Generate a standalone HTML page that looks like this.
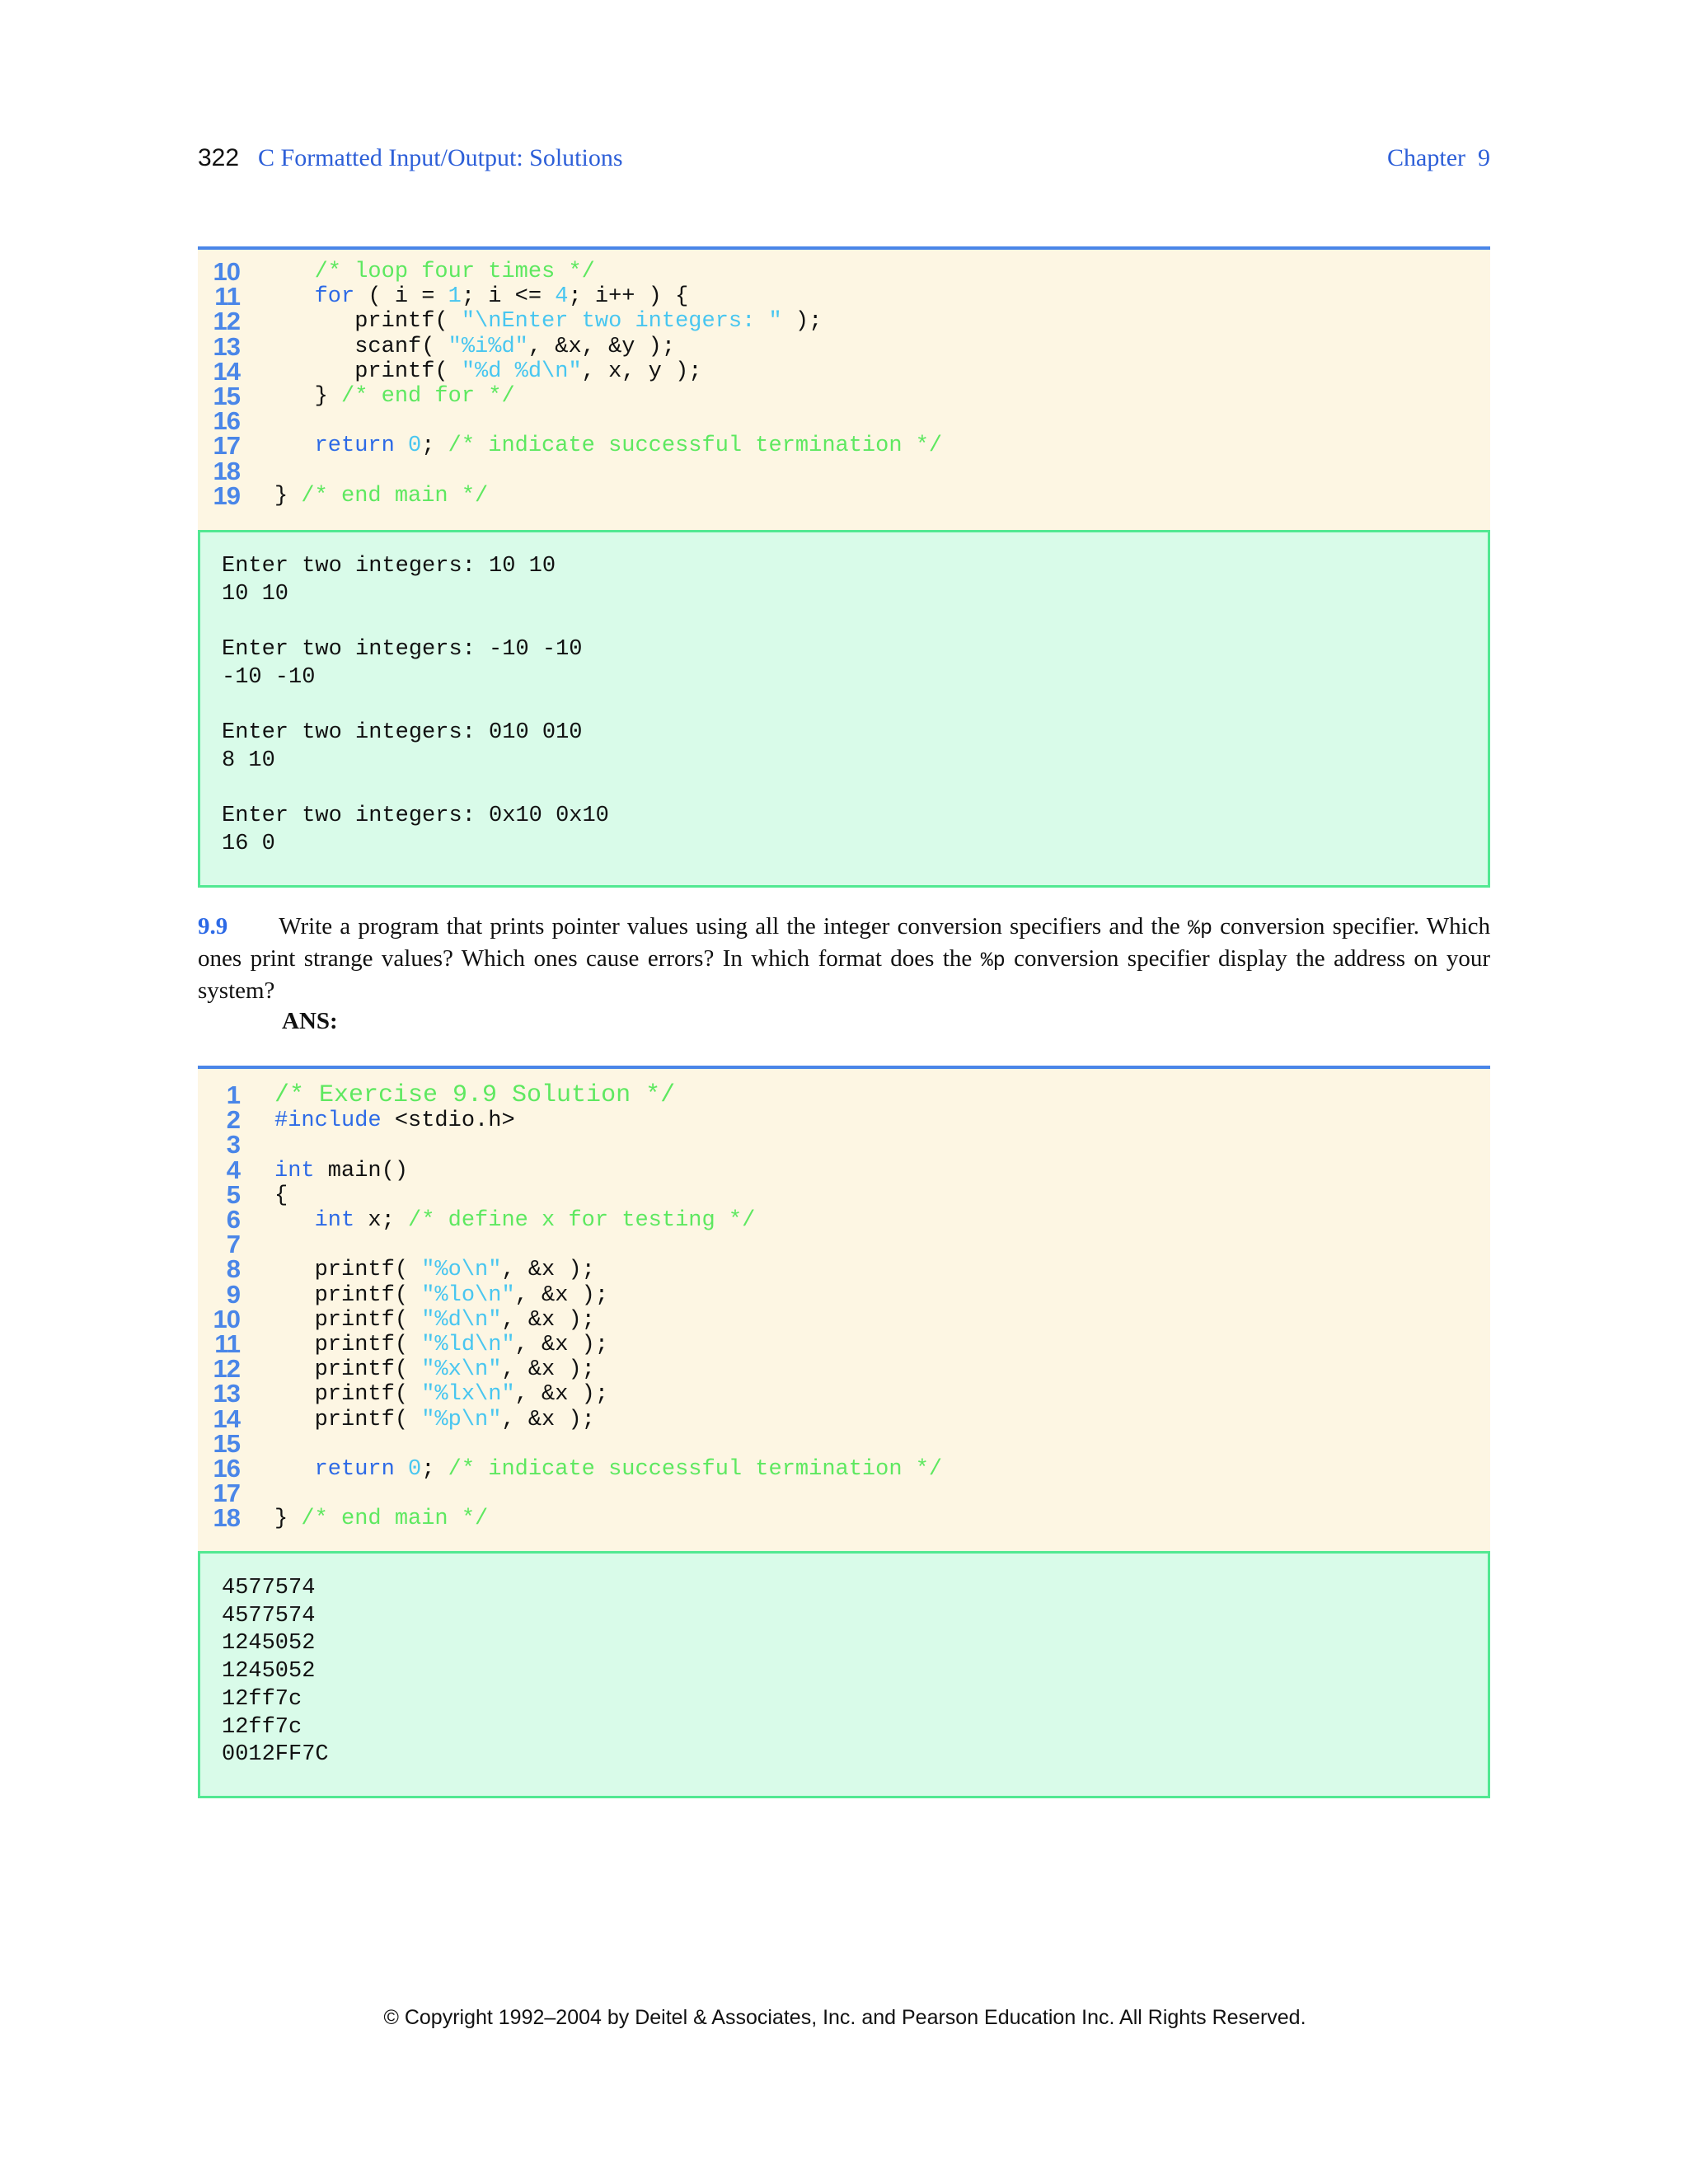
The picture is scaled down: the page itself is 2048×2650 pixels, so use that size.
<!DOCTYPE html>
<html><head><meta charset="utf-8"><style>
body{margin:0;width:2048px;height:2650px;background:#fff;position:relative;overflow:hidden}
.a{position:absolute}
.hd{font-family:"Liberation Serif",serif;font-size:30px;color:#2d5fd8;top:175px}
.box{position:absolute;left:240px;width:1568px;background:#fdf6e3}
.out{position:absolute;left:240px;width:1562px;background:#d9fbe9;border:3px solid #52e892}
pre{margin:0;position:absolute;font-family:"Liberation Mono",monospace;font-size:27px;line-height:30.2px;color:#111}
.ln{font-family:"Liberation Sans",sans-serif;font-weight:bold;color:#4a86e8;text-align:right;width:70px;left:221px;font-size:31px;letter-spacing:-1px}
.c{color:#5ee860}.k{color:#2d6ae6}.s{color:#48c6f0}
.o{line-height:33.7px;left:269px}
.q{font-family:"Liberation Serif",serif;font-size:29px;line-height:37px;color:#111;text-align:justify;text-align-last:left;left:240px;width:1568px;top:1106px}
</style></head><body>
<div class="a" style="left:240px;top:175px;font-family:'Liberation Sans',sans-serif;font-size:30px;color:#111">322</div>
<div class="a hd" style="left:313px">C Formatted Input/Output: Solutions</div>
<div class="a hd" style="right:240px">Chapter&nbsp; 9</div>

<div class="box" style="top:299px;height:344px;border-top:4px solid #4a86e8"></div>
<pre class="ln" style="top:315px">10
11
12
13
14
15
16
17
18
19</pre>
<pre style="left:333px;top:315px">   <span class="c">/* loop four times */</span>
   <span class="k">for</span> ( i = <span class="s">1</span>; i &lt;= <span class="s">4</span>; i++ ) {
      printf( <span class="s">"\nEnter two integers: "</span> );
      scanf( <span class="s">"%i%d"</span>, &amp;x, &amp;y );
      printf( <span class="s">"%d %d\n"</span>, x, y );
   } <span class="c">/* end for */</span>

   <span class="k">return</span> <span class="s">0</span>; <span class="c">/* indicate successful termination */</span>

} <span class="c">/* end main */</span></pre>

<div class="out" style="top:643px;height:428px"></div>
<pre class="o" style="top:671px">Enter two integers: 10 10
10 10

Enter two integers: -10 -10
-10 -10

Enter two integers: 010 010
8 10

Enter two integers: 0x10 0x10
16 0</pre>

<div class="a q"><b style="color:#2d6ae6">9.9</b><span style="display:inline-block;width:62px"></span>Write a program that prints pointer values using all the integer conversion specifiers and the <span style="font-family:'Liberation Mono',monospace;font-size:25px">%p</span> conversion specifier. Which ones print strange values? Which ones cause errors? In which format does the <span style="font-family:'Liberation Mono',monospace;font-size:25px">%p</span> conversion specifier display the address on your system?<br><b style="margin-left:102px">ANS:</b></div>

<div class="box" style="top:1293px;height:589px;border-top:4px solid #4a86e8"></div>
<pre class="ln" style="top:1314px">1
2
3
4
5
6
7
8
9
10
11
12
13
14
15
16
17
18</pre>
<pre style="left:333px;top:1314px"><span class="c" style="font-size:30px">/* Exercise 9.9 Solution */</span>
<span class="k">#include</span> &lt;stdio.h&gt;

<span class="k">int</span> main()
{
   <span class="k">int</span> x; <span class="c">/* define x for testing */</span>

   printf( <span class="s">"%o\n"</span>, &amp;x );
   printf( <span class="s">"%lo\n"</span>, &amp;x );
   printf( <span class="s">"%d\n"</span>, &amp;x );
   printf( <span class="s">"%ld\n"</span>, &amp;x );
   printf( <span class="s">"%x\n"</span>, &amp;x );
   printf( <span class="s">"%lx\n"</span>, &amp;x );
   printf( <span class="s">"%p\n"</span>, &amp;x );

   <span class="k">return</span> <span class="s">0</span>; <span class="c">/* indicate successful termination */</span>

} <span class="c">/* end main */</span></pre>

<div class="out" style="top:1882px;height:294px"></div>
<pre class="o" style="top:1911px">4577574
4577574
1245052
1245052
12ff7c
12ff7c
0012FF7C</pre>

<div class="a" style="left:0;width:2050px;text-align:center;top:2434px;font-family:'Liberation Sans',sans-serif;font-size:25px;color:#111">© Copyright 1992–2004 by Deitel &amp; Associates, Inc. and Pearson Education Inc. All Rights Reserved.</div>
</body></html>
